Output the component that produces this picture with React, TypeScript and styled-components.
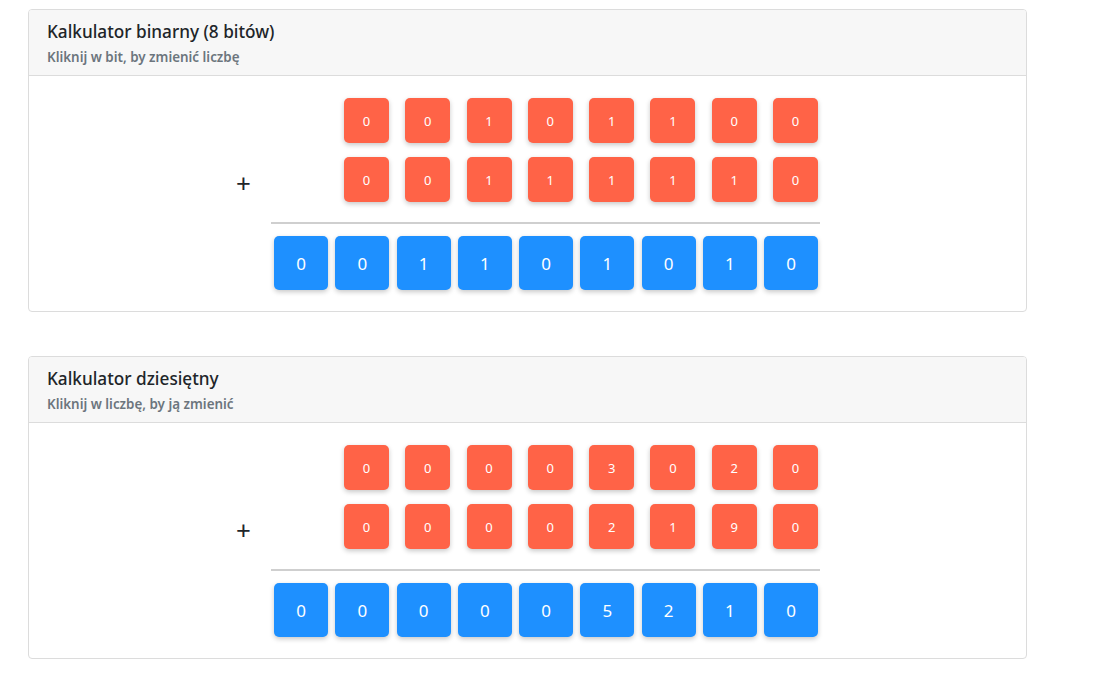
import React, { useState } from "react";
import styled, { createGlobalStyle } from "styled-components";

const GlobalStyle = createGlobalStyle`
  html, body {
    margin: 0;
    padding: 0;
    background: #fff;
    font-family: "Noto Sans", "Open Sans", sans-serif;
    color: #212529;
  }
`;

const Page = styled.div`
  padding: 9px 0 30px 28px;
  display: flex;
  flex-direction: column;
  gap: 44px;
`;

const Card = styled.section`
  width: 999px;
  box-sizing: border-box;
  border: 1px solid #dcdcdc;
  border-radius: 4px;
  background: #fff;
  overflow: hidden;
`;

const CardHeader = styled.header`
  background: #f7f7f7;
  border-bottom: 1px solid #dcdcdc;
  padding: 10px 18px 10px;
`;

const Title = styled.h2`
  margin: 0;
  font-size: 17.2px;
  font-weight: 500;
  line-height: 24px;
  color: #212529;
`;

const Subtitle = styled.div`
  margin-top: 5px;
  font-size: 13.4px;
  font-weight: 600;
  line-height: 16px;
  color: #6c757d;
`;

const CardBody = styled.div`
  padding: 22px 0 21px 207px;
  display: grid;
  grid-template-columns: 35px 549px;
`;

const PlusCol = styled.div`
  display: flex;
  flex-direction: column;
`;

const PlusSlot = styled.div<{ $show?: boolean }>`
  height: 45px;
  margin-bottom: ${(p) => (p.$show ? "0" : "14px")};
  display: flex;
  align-items: center;
  font-size: 26px;
  font-weight: 400;
  line-height: 1;
  visibility: ${(p) => (p.$show ? "visible" : "hidden")};
  padding-top: 6px;
  box-sizing: border-box;
`;

const Stack = styled.div`
  display: flex;
  flex-direction: column;
`;

const Row = styled.div<{ $gap: number; $mb?: number }>`
  display: flex;
  justify-content: flex-end;
  gap: ${(p) => p.$gap}px;
  padding-right: 2px;
  margin-bottom: ${(p) => p.$mb ?? 0}px;
`;

const Cell = styled.button<{ $kind: "input" | "result" }>`
  border: none;
  padding: 0;
  margin: 0;
  width: ${(p) => (p.$kind === "input" ? 45 : 54)}px;
  height: ${(p) => (p.$kind === "input" ? 45 : 54)}px;
  border-radius: 5px;
  background: ${(p) => (p.$kind === "input" ? "#ff6347" : "#1e90ff")};
  color: #fff;
  font-family: "Noto Sans", "Open Sans", sans-serif;
  font-size: ${(p) => (p.$kind === "input" ? 13 : 17)}px;
  box-shadow: 0 2px 5px rgba(0, 0, 0, 0.22);
  cursor: ${(p) => (p.$kind === "input" ? "pointer" : "default")};
  display: flex;
  align-items: center;
  justify-content: center;
`;

const Divider = styled.hr`
  border: none;
  height: 2px;
  background: #cfcfcf;
  margin: 20px 0 12px;
`;

function toDigits(n: number, base: number, len: number) {
  const s = n.toString(base).padStart(len, "0");
  return s.split("").map(Number);
}

function fromDigits(d: number[], base: number) {
  return d.reduce((acc, v) => acc * base + v, 0);
}

function Calculator({
  title,
  subtitle,
  base,
  initA,
  initB,
}: {
  title: string;
  subtitle: string;
  base: number;
  initA: number[];
  initB: number[];
}) {
  const [a, setA] = useState(initA);
  const [b, setB] = useState(initB);

  const bump = (arr: number[], set: (v: number[]) => void, i: number) => {
    const next = [...arr];
    next[i] = (next[i] + 1) % base;
    set(next);
  };

  const sum = toDigits(fromDigits(a, base) + fromDigits(b, base), base, 9);

  return (
    <Card>
      <CardHeader>
        <Title>{title}</Title>
        <Subtitle>{subtitle}</Subtitle>
      </CardHeader>
      <CardBody>
        <PlusCol>
          <PlusSlot />
          <PlusSlot $show>+</PlusSlot>
        </PlusCol>
        <Stack>
          <Row $gap={16.3} $mb={14}>
            {a.map((d, i) => (
              <Cell key={i} $kind="input" onClick={() => bump(a, setA, i)}>
                {d}
              </Cell>
            ))}
          </Row>
          <Row $gap={16.3}>
            {b.map((d, i) => (
              <Cell key={i} $kind="input" onClick={() => bump(b, setB, i)}>
                {d}
              </Cell>
            ))}
          </Row>
          <Divider />
          <Row $gap={7.25}>
            {sum.map((d, i) => (
              <Cell key={i} $kind="result" as="div">
                {d}
              </Cell>
            ))}
          </Row>
        </Stack>
      </CardBody>
    </Card>
  );
}

export default function App() {
  return (
    <>
      <GlobalStyle />
      <Page>
        <Calculator
          title="Kalkulator binarny (8 bitów)"
          subtitle="Kliknij w bit, by zmienić liczbę"
          base={2}
          initA={[0, 0, 1, 0, 1, 1, 0, 0]}
          initB={[0, 0, 1, 1, 1, 1, 1, 0]}
        />
        <Calculator
          title="Kalkulator dziesiętny"
          subtitle="Kliknij w liczbę, by ją zmienić"
          base={10}
          initA={[0, 0, 0, 0, 3, 0, 2, 0]}
          initB={[0, 0, 0, 0, 2, 1, 9, 0]}
        />
      </Page>
    </>
  );
}
